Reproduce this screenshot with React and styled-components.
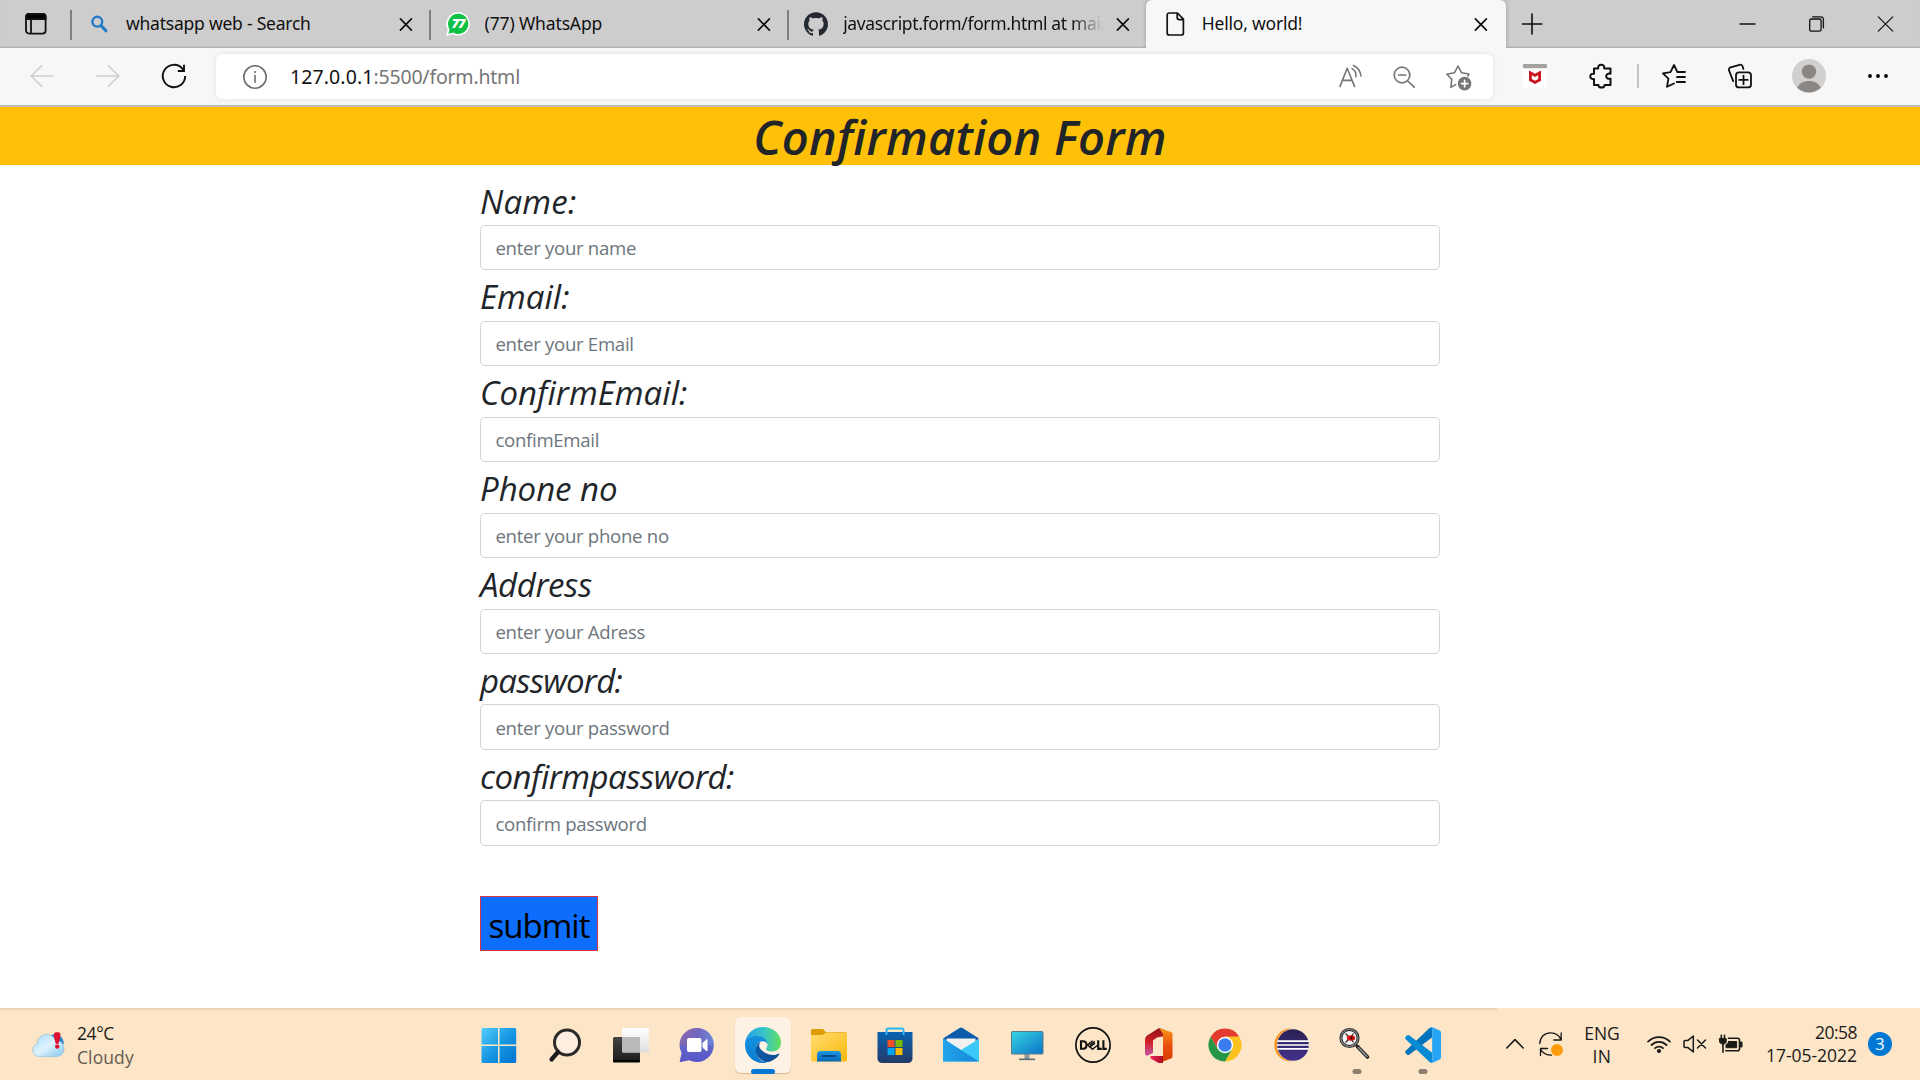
import React from "react";
import styled, { createGlobalStyle } from "styled-components";
import { SiGithub } from "react-icons/si";

const GlobalStyle = createGlobalStyle`
  *, *::before, *::after { box-sizing: border-box; }
  body { margin: 0; background: #fff; overflow: hidden; }
  svg { display: block; flex: none; overflow: visible; }
`;

const Screen = styled.div`
  width: 1920px;
  height: 1080px;
  display: grid;
  grid-template-rows: 48px 59px 1fr 72px;
  background: #fff;
  font-family: "Open Sans", "Noto Sans", sans-serif;
`;

/* ---------- Browser tab strip ---------- */

const TabStrip = styled.header`
  display: flex;
  align-items: center;
  background: #cdcdcd;
  box-shadow: inset 0 -2px 2px -1px rgba(0, 0, 0, 0.18);
`;

const TabActions = styled.div`
  width: 70px;
  padding-left: 25px;
`;

const Divider = styled.span`
  flex: none;
  width: 2px;
  height: 30px;
  margin-top: 2px;
  background: #7f7f7f;
`;

const Tab = styled.div`
  flex: none;
  width: ${(p) => (p.$active ? 360 : 356.6)}px;
  height: 48px;
  padding: ${(p) => (p.$active ? "0 17px" : "0 15px")};
  display: flex;
  align-items: center;
  border-radius: 6px 6px 0 0;
  background: ${(p) => (p.$active ? "#f7f7f7" : "transparent")};
  box-shadow: ${(p) => (p.$active ? "0 0 4px rgba(0,0,0,0.25)" : "none")};
  clip-path: inset(0 -4px 0 -4px);
`;

const TabTitle = styled.span`
  flex: 1;
  min-width: 0;
  margin: 0 12px 0 15px;
  padding-bottom: 2px;
  overflow: hidden;
  white-space: nowrap;
  font: 17.5px/24px "Noto Sans", sans-serif;
  letter-spacing: ${(p) => p.$track}px;
  color: #111;
  mask-image: ${(p) => (p.$fade ? "linear-gradient(90deg, #000 88%, transparent 100%)" : "none")};
`;

const NewTab = styled.div`
  margin-left: 16px;
  padding-bottom: 1px;
`;

const WindowControls = styled.div`
  margin-left: auto;
  padding-right: 27px;
  display: flex;
  gap: 54px;
`;

/* ---------- Toolbar ---------- */

const Toolbar = styled.nav`
  display: flex;
  align-items: center;
  padding: 0 30px 2px;
  background: #f7f7f7;
  border-bottom: 2px solid #bdbdbd;
`;

const NavButtons = styled.div`
  display: flex;
  gap: 42px;
`;

const AddressBar = styled.div`
  flex: none;
  width: 1277px;
  height: 45px;
  margin: 2px 30px 0;
  padding: 0 23px 0 27px;
  display: flex;
  align-items: center;
  border-radius: 6px;
  background: #fff;
  box-shadow: 0 0 5px rgba(0, 0, 0, 0.1);
`;

const Url = styled.span`
  margin-left: 23px;
  font: 19.5px/28px "Noto Sans", sans-serif;
  letter-spacing: -0.2px;
  color: #767676;
`;

const Host = styled.span`
  color: #111;
  letter-spacing: 0.1px;
`;

const AddressActions = styled.div`
  margin-left: auto;
  display: flex;
  gap: 30px;
`;

const ToolbarSeparator = styled.span`
  width: 2px;
  height: 24px;
  margin: 0 23px 0 24px;
  background: #c2c2c2;
`;

const Extensions = styled.div`
  display: flex;
  align-items: center;
  gap: 42px;
`;

const Profile = styled.div`
  display: flex;
  align-items: center;
  gap: 40px;
  margin-left: 40px;
`;

/* ---------- Page ---------- */

const Page = styled.main`
  display: flex;
  flex-direction: column;
  align-items: center;
`;

const Banner = styled.h1`
  width: 100%;
  height: 58px;
  margin: 0 0 9.6px;
  background: #ffc107;
  color: #212529;
  text-align: center;
  font: italic 600 47px/61px "Open Sans", sans-serif;
  letter-spacing: 0.27px;
`;

const Form = styled.form`
  width: 960px;
  display: flex;
  flex-direction: column;
  align-items: flex-start;
`;

const Label = styled.label`
  height: 50.4px;
  font-size: 33px;
  line-height: 53.2px;
  font-style: italic;
  letter-spacing: ${(p) => p.$track}px;
  color: #212529;
`;

const Input = styled.input`
  width: 960px;
  height: 45.5px;
  padding: 7px 14.4px;
  border: 1px solid #ced4da;
  border-radius: 4.8px;
  background: #fff;
  font: 18.6px/28.8px "Open Sans", sans-serif;
  letter-spacing: -0.29px;
  outline: none;
  &::placeholder { color: #6c757d; opacity: 1; }
`;

const Submit = styled.button`
  width: 118px;
  height: 55px;
  margin-top: 50px;
  padding: 4px 0 0;
  border: 1px solid #dc3545;
  background: #0d6efd;
  color: #000;
  font: 33px/49px "Open Sans", sans-serif;
  letter-spacing: -0.95px;
`;

/* ---------- Taskbar ---------- */

const Taskbar = styled.footer`
  display: grid;
  grid-template-columns: 466px 990px 1fr;
  background: linear-gradient(#ecd3b5, #ecd3b5) 0 0 / 1497px 2px no-repeat, #fde5c7;
`;

const Weather = styled.div`
  display: flex;
  align-items: center;
  gap: 12px;
  padding: 1px 0 0 32px;
`;

const Lines = styled.div`
  display: flex;
  flex-direction: column;
  align-items: ${(p) => p.$align || "flex-start"};
  width: ${(p) => (p.$width ? p.$width + "px" : "auto")};
  padding-top: ${(p) => p.$drop || 0}px;
  font-size: 17.5px;
  line-height: ${(p) => p.$leading || 23.5}px;
  color: #1b1a19;
  white-space: nowrap;
`;

const Line = styled.span`
  letter-spacing: ${(p) => p.$track || 0}px;
  color: ${(p) => (p.$muted ? "#655c50" : "inherit")};
`;

const Apps = styled.div`
  display: grid;
  grid-template-columns: repeat(15, 66px);
`;

const AppSlot = styled.div`
  position: relative;
  display: grid;
  place-items: center;
  padding-top: 2px;
  &::after {
    content: "";
    position: absolute;
    bottom: 6px;
    left: 50%;
    width: ${(p) => (p.$state === "active" ? 24 : 9)}px;
    height: 5px;
    transform: translateX(-50%);
    border-radius: 3px;
    background: ${(p) => (p.$state === "active" ? "#0078d4" : "#8d7f6f")};
    display: ${(p) => (p.$state ? "block" : "none")};
  }
`;

const AppTile = styled.div`
  display: grid;
  place-items: center;
  width: 56px;
  height: 56px;
  border-radius: 6px;
  background: ${(p) => (p.$active ? "#fef2e4" : "transparent")};
  box-shadow: ${(p) => (p.$active ? "0 1px 1px rgba(120,80,30,0.3)" : "none")};
`;

const Tray = styled.div`
  display: flex;
  align-items: center;
  padding-left: 50px;
`;

const SyncSlot = styled.div`
  margin-left: -6px;
`;

const TrayGroup = styled.div`
  display: flex;
  align-items: center;
  gap: ${(p) => p.$gap}px;
  margin-right: ${(p) => p.$after}px;
`;

const Badge = styled.span`
  width: 24px;
  height: 24px;
  margin-left: 11px;
  border-radius: 50%;
  background: #0078d4;
  color: #fff;
  text-align: center;
  font-size: 16.5px;
  line-height: 24px;
`;

/* ---------- Icons ---------- */

const Line24 = ({ color = "#111", sw = 1.6, w = 24, h = 24, children }) => (
  <svg width={w} height={h} viewBox={`0 0 ${w} ${h}`} fill="none" stroke={color} strokeWidth={sw} strokeLinecap="round" strokeLinejoin="round">
    {children}
  </svg>
);

const TabActionsIcon = () => (
  <Line24 w={22} h={22} sw={1.8}>
    <rect x="1" y="1" width="19.6" height="19.6" rx="3" />
    <path d="M1 4a3 3 0 0 1 3-3h13.6a3 3 0 0 1 3 3v2H1z" fill="#000" />
    <path d="M6 6v14" />
  </Line24>
);
const SearchTabIcon = () => (
  <Line24 color="#2079c9" sw={2.4}>
    <circle cx="10.3" cy="9.7" r="4.9" />
    <path d="M14 13.6l5 5.2" strokeWidth="3" />
  </Line24>
);
const WhatsAppIcon = () => (
  <svg width="24" height="24" viewBox="0 0 24 24">
    <path d="M12.2.2a11.7 11.7 0 1 1-5.6 22L0 24l1.8-6.4A11.7 11.7 0 0 1 12.2.2z" fill="#fff" />
    <path d="M12.3 1.8a10.1 10.1 0 1 1-5.2 18.8L2.4 21.8l1.2-4.6A10.1 10.1 0 0 1 12.3 1.8z" fill="#0cc143" />
    <text x="12.2" y="16.4" textAnchor="middle" fontFamily="Open Sans, sans-serif" fontSize="12.5" fontWeight="800" fontStyle="italic" letterSpacing="-.8" fill="#fff">77</text>
  </svg>
);
const PageIcon = () => (
  <Line24 sw={1.7}>
    <path d="M6.2 1h8.2l6 6.2V21a2 2 0 0 1-2 2H6.2a2 2 0 0 1-2-2V3a2 2 0 0 1 2-2zM14.2 1v4.6a2 2 0 0 0 2 2h4.2" />
  </Line24>
);
const CloseIcon = () => (
  <Line24 w={16} h={16} sw={1.7}><path d="M2.4 2.8l11 11.4M13.4 2.8l-11 11.4" /></Line24>
);
const PlusIcon = () => (
  <Line24 w={20} h={22}><path d="M10 1v20M.5 11h19.3" /></Line24>
);
const MinimizeIcon = () => (
  <Line24 w={15} h={16} sw={1.4}><path d="M0 8h15" /></Line24>
);
const RestoreIcon = () => (
  <Line24 w={15} h={16} sw={1.3}>
    <rect x=".7" y="3" width="11.4" height="12.2" rx="1.8" />
    <path d="M3.6.8h8.2a2.6 2.6 0 0 1 2.6 2.6v8.4" />
  </Line24>
);
const WinCloseIcon = () => (
  <Line24 w={15} h={16} sw={1.2}><path d="M.3.8l14.4 14.4M14.7.8L.3 15.2" /></Line24>
);

const BackIcon = () => (
  <Line24 color="#cfcfcf" sw={1.6}><path d="M23.3 12H1M11.6 1.8L1 12l10.6 10.2" /></Line24>
);
const ForwardIcon = () => (
  <Line24 color="#cfcfcf" sw={1.6}><path d="M.7 12H23M12.4 1.8L23 12 12.4 22.2" /></Line24>
);
const RefreshIcon = () => (
  <Line24 sw={1.9}>
    <path d="M23.2 12A11.2 11.2 0 1 1 20.4 4.6L22 6.8" strokeLinecap="butt" />
    <path d="M22 .8v6.2h-6.2" strokeLinecap="butt" strokeLinejoin="miter" />
  </Line24>
);
const InfoIcon = () => (
  <Line24 color="#6e6e6e" sw={1.6}>
    <circle cx="12" cy="12" r="11.2" />
    <path d="M12 10.6v6.6" />
    <circle cx="12" cy="7" r=".7" fill="#6e6e6e" strokeWidth=".8" />
  </Line24>
);
const ReadAloudIcon = () => (
  <Line24 color="#767676" sw={1.6}>
    <path d="M2 21.4L9.2 3.2l7.3 18.2M4.6 15.4h9.4M14 3.600a8 8 0 0 1 3.900 8M15.500.4a13 13 0 0 1 7.500 10.600" />
  </Line24>
);
const ZoomOutIcon = () => (
  <Line24 color="#767676" sw={1.7}>
    <circle cx="10" cy="10" r="7.8" />
    <path d="M6.4 10h7.2M15.8 16l6.4 6.2" />
  </Line24>
);
const StarAddIcon = () => (
  <Line24 color="#767676" sw={1.6}>
    <path d="M9.6 19.6l-4.8 2.8 1-8.2L.8 9.2l7.6-1.4L12 1l3.6 6.8 7.4 1.2-1.2 2" />
    <circle cx="18.6" cy="18.6" r="6" fill="#767676" />
    <path d="M18.6 15.4v6.4M15.4 18.6h6.4" stroke="#fff" strokeWidth="1.7" />
  </Line24>
);
const McAfeeIcon = () => (
  <svg width="24" height="24" viewBox="0 0 24 24">
    <path d="M0 2h24v22H0z" fill="#fff" />
    <rect width="24" height="4.2" rx="1" fill="#a5a2a2" />
    <path d="M6 6.6l6 3.2 6-3.2v10.2L12 20l-6-3.2z" fill="#c8141e" />
    <path d="M8.8 11.2l3.2 1.7 3.2-1.7v3.8L12 16.8 8.8 15z" fill="#fff" />
  </svg>
);
const PuzzleIcon = () => (
  <Line24 sw={2}>
    <path d="M5 4.500h4.200c-.4-2.500 1-3.800 3-3.800s3.400 1.300 3 3.800H21.500v5.200c-2.600-.5-4.300.6-4.300 2.500s1.700 3 4.300 2.500V21h-6c.4 1.600-1.100 2.500-3 2.500s-3.400-.9-3-2.500H5v-5.900c-2.400.3-3.700-.9-3.700-2.700S2.600 9.400 5 9.700z" />
  </Line24>
);
const FavoritesIcon = () => (
  <Line24 sw={1.8}>
    <path d="M12 19.500l-7 3.300 1.400-8.200L.9 9.400l7.600-1.200L12 1l3.400 7H23M15 13h8M14.800 18h8.200" />
  </Line24>
);
const CollectionsIcon = () => (
  <Line24 sw={1.8}>
    <rect x="8" y="8.400" width="15" height="15" rx="3" />
    <path d="M15.500 11.600v8.600M11.200 15.900h8.600M5.200 17.200L1 6.400a2.400 2.400 0 0 1 1.600-3L11.600.8a2.400 2.400 0 0 1 3 1.600l.8 2.600" />
  </Line24>
);
const AvatarIcon = () => (
  <svg width="34" height="34" viewBox="0 0 34 34">
    <circle cx="17" cy="17" r="17" fill="#d2d0ce" />
    <circle cx="17" cy="12.600" r="7.200" fill="#8a8683" />
    <path d="M5.300 28.800C7 24.400 11.500 22 17 22s10 2.400 11.700 6.800A17 17 0 0 1 17 33.200a17 17 0 0 1-11.700-4.400z" fill="#8a8683" />
  </svg>
);
const MoreIcon = () => (
  <svg width="24" height="24" viewBox="0 0 24 24">
    <circle cx="4" cy="12" r="1.900" /><circle cx="12" cy="12" r="1.900" /><circle cx="20" cy="12" r="1.900" />
  </svg>
);

const WeatherIcon = () => (
  <svg width="33" height="26" viewBox="0 0 33 26">
    <defs>
      <linearGradient id="cl" x1="0" y1="0" x2="1" y2="1">
        <stop offset="0" stopColor="#a7dcf8" /><stop offset=".5" stopColor="#dff2fd" /><stop offset="1" stopColor="#86c8ee" />
      </linearGradient>
    </defs>
    <path d="M18 4c7-5 14 1 13.800 8l-5 1z" fill="#2f83c8" />
    <path d="M6.500 24.400A6.400 6.400 0 0 1 5.200 12 9.500 9.500 0 0 1 14 2.400c5 0 8.500 2.600 9.600 6.200 5 0 8.400 3 8.400 8s-3.400 7.800-7.600 7.800z" fill="url(#cl)" stroke="#78b8de" strokeWidth=".6" />
    <path d="M22.200 1.200c1-1.300 5-1.300 6 0 .8 1.600-.6 7-1.400 10-.4 1-2.800 1-3.200 0-.8-3-2.200-8.400-1.400-10z" fill="#e0102f" />
    <circle cx="25.200" cy="14.600" r="2.200" fill="#e0102f" />
  </svg>
);

const App36 = ({ children }) => <svg width="36" height="36" viewBox="0 0 36 36">{children}</svg>;
const Grad = ({ id, from, mid, to, h, v }) => (
  <linearGradient id={id} x1="0" y1="0" x2={v ? 0 : 1} y2={h ? 0 : 1}>
    <stop offset="0" stopColor={from} />
    {mid && <stop offset=".5" stopColor={mid} />}
    <stop offset="1" stopColor={to} />
  </linearGradient>
);

const StartIcon = () => (
  <App36>
    <defs>
      <linearGradient id="st" gradientUnits="userSpaceOnUse" x1="0" y1="0" x2="36" y2="36">
        <stop offset="0" stopColor="#56d0fc" /><stop offset=".5" stopColor="#1899e3" /><stop offset="1" stopColor="#0072d0" />
      </linearGradient>
    </defs>
    <path d="M2 1h15v16.500H.500V2.500A1.500 1.500 0 0 1 2 1zM18.500 1h15.200a1.500 1.500 0 0 1 1.500 1.500v15H18.500zM.5 19H17v17H2a1.500 1.500 0 0 1-1.500-1.500zM18.500 19h16.700v15.500a1.500 1.500 0 0 1-1.500 1.500H18.500z" fill="url(#st)" />
  </App36>
);
const SearchIcon = () => (
  <App36>
    <circle cx="20" cy="15.500" r="12.500" fill="#fdeee0" stroke="#2b2a29" strokeWidth="3" />
    <path d="M11 25l-6.500 7.500" stroke="#1c1b1b" strokeWidth="4.200" strokeLinecap="round" />
  </App36>
);
const TaskViewIcon = () => (
  <App36>
    <defs><Grad id="tv" from="#454442" to="#1c1b1a" v /><Grad id="tw" from="#fff" to="#dedede" v /></defs>
    <rect x="0" y="10" width="27" height="25" rx="1.500" fill="url(#tv)" />
    <path d="M0 33h27v1.500a1 1 0 0 1-1 1H1a1 1 0 0 1-1-1z" fill="#050505" />
    <rect x="9" y="1" width="27" height="24.500" rx="1.500" fill="url(#tw)" />
    <path d="M9 10h18v15.500H10.500A1.500 1.500 0 0 1 9 24z" fill="#b9b9b9" />
  </App36>
);
const ChatIcon = () => (
  <App36>
    <defs><Grad id="ch" from="#8b68ad" mid="#6668c8" to="#5554c8" v /><Grad id="ch2" from="#9a679e" mid="#6466c6" to="#6aa0f0" h /></defs>
    <path d="M18 1a17 17 0 1 1-7.800 32.200L1.600 35c-.8.100-1-.4-.8-1l1.800-8A17 17 0 0 1 18 1z" fill="url(#ch)" />
    <path d="M18 1a17 17 0 0 1 17 17H1A17 17 0 0 1 18 1z" fill="url(#ch2)" opacity=".55" />
    <rect x="8" y="11" width="14.500" height="14" rx="2" fill="#fff" />
    <path d="M24 16l4-3.500V24l-4-3.500z" fill="#fff" stroke="#fff" strokeLinejoin="round" />
  </App36>
);
const EdgeIcon = () => (
  <App36>
    <defs>
      <Grad id="e1" from="#249fe0" mid="#35c3cf" to="#63e05c" h />
      <Grad id="e2" from="#1491df" to="#0a7bd0" v />
      <Grad id="e3" from="#0c5ba8" to="#124c92" h />
    </defs>
    <path d="M.2 15.500C1.500 6 9 0 18 0c10 0 18 7 18 15.500 0 6-4 9-9 9-4 0-6-1-6-2.200 0-1.300 1.500-1.800 1.500-4.300 0-5-5-9-11-9-5.500 0-9.600 2.500-11.300 6.500z" fill="url(#e1)" />
    <path d="M.2 15C2 10.800 6.500 8.800 11.500 8.800c6 0 10.800 3.800 11 8.400-1-2.200-3-3.200-5-3-4.500.3-7 5-6.500 10C11.500 30 16 35 22 35.400c-1.300.4-2.600.6-4 .6C8 36 0 28 0 18c0-1 0-2 .2-3z" fill="url(#e2)" />
    <path d="M15.500 15c-5.500 2.500-7 11-1 16.500 3.500 3.500 8.500 4.500 12 2.500 3.500-1.700 6.400-4.300 7.800-6.800.3-.6-.3-.9-.9-.5C30 28.400 25 28.500 20.500 26 15 23 12.500 19 15.500 15z" fill="url(#e3)" />
  </App36>
);
const FolderIcon = () => (
  <App36>
    <defs><Grad id="fo" from="#ffdd70" to="#fbb80c" /><Grad id="fp" from="#1f97e2" to="#0667b8" v /></defs>
    <path d="M0 3.500A1.500 1.500 0 0 1 1.500 2H12l3 3.200h19.500A1.500 1.500 0 0 1 36 6.700V14H0z" fill="#dd9d05" />
    <path d="M0 8h11.500L15 5.700h21V33a1.500 1.500 0 0 1-1.500 1.500h-33A1.500 1.500 0 0 1 0 33z" fill="url(#fo)" />
    <path d="M6 34.500V27.500A3.500 3.500 0 0 1 9.500 24h17a3.500 3.500 0 0 1 3.500 3.500v7z" fill="url(#fp)" />
    <path d="M11.500 29h13" stroke="#0b4a86" strokeWidth="2" strokeLinecap="round" />
  </App36>
);
const StoreIcon = () => (
  <App36>
    <defs><Grad id="so" from="#0a63b2" to="#243a66" v /></defs>
    <path d="M9.500 8V3a1.500 1.500 0 0 1 1.500-1.500h14A1.500 1.500 0 0 1 26.500 3v5" fill="none" stroke="#2cb5ef" strokeWidth="2" />
    <path d="M.5 5h35v26.500a4.500 4.500 0 0 1-4.500 4.500H5a4.500 4.500 0 0 1-4.500-4.500z" fill="url(#so)" />
    <path d="M9.500 8V5M26.500 8V5" stroke="#2cb5ef" strokeWidth="2" />
    <path d="M10.500 13h7v7h-7z" fill="#f25022" /><path d="M18.500 13h7v7h-7z" fill="#7fba00" />
    <path d="M10.500 21h7v7h-7z" fill="#00a4ef" /><path d="M18.500 21h7v7h-7z" fill="#ffb900" />
  </App36>
);
const MailIcon = () => (
  <App36>
    <defs><Grad id="ml" from="#22a4ea" to="#1685d8" h /></defs>
    <path d="M0 11.500L16.500.900a3 3 0 0 1 3 0L36 11.500 27 18H9z" fill="#0c5cab" />
    <path d="M3.500 11.500h29v9L18 25 3.500 20z" fill="#f1f1f1" />
    <path d="M0 11.500L18 23 36 12v22.500H0z" fill="#3ac9f8" />
    <path d="M0 11.500L36 34.500H0z" fill="url(#ml)" />
  </App36>
);
const MonitorIcon = () => (
  <App36>
    <defs><Grad id="mo" from="#37d6e4" to="#0b72c4" /></defs>
    <path d="M15.500 27h5v5h-5z" fill="#8d979f" />
    <path d="M10 32.300h16" stroke="#5d6870" strokeWidth="1.600" />
    <rect x="2.500" y="4.500" width="31.500" height="22.500" rx=".8" fill="url(#mo)" stroke="#5b7d8a" />
  </App36>
);
const DellIcon = () => (
  <App36>
    <circle cx="18" cy="18" r="17.100" fill="none" stroke="#111" strokeWidth="1.700" />
    <g fill="none" stroke="#111" strokeWidth="2.100">
      <path d="M6 14.200h2c2.300 0 3.500 1.500 3.500 3.800s-1.200 3.800-3.500 3.800H6zM23.200 13.200v8.700h3.600M28.400 13.200v8.700h3.400" />
      <path d="M17.600 13.700l-5 4.200 2.200 2.200 5.200-4M15.200 20l2.200 2.200 4.800-3.700M14.800 18.300l5-4" strokeWidth="1.400" />
    </g>
  </App36>
);
const OfficeIcon = () => (
  <App36>
    <defs><Grad id="o1" from="#8d1014" mid="#d12027" to="#c259a2" v /><Grad id="o2" from="#f79a1c" mid="#e8500c" to="#d83b01" v /><Grad id="o3" from="#f0255f" to="#a90f22" h /></defs>
    <path d="M4 12.500a5 5 0 0 1 2.500-4.300L18 1l6 2v6l-8 1.500-4 3v12.500L7 28.500c-1.500.500-3-.3-3-2z" fill="url(#o1)" />
    <path d="M18 1l12 4a2 2 0 0 1 1.500 2v22.500a2 2 0 0 1-1.500 2L18 36l4-3V7z" fill="url(#o2)" />
    <path d="M10 29h12v7h-4.500L10.500 32c-1.500-1-1.500-2.500-.5-3z" fill="url(#o3)" />
  </App36>
);
const ChromeIcon = () => (
  <App36>
    <path d="M3.710 9.750A16.500 16.500 0 0 1 32.290 9.750H18L10.860 22.130z" fill="#e33b2e" />
    <path d="M32.290 9.750A16.500 16.500 0 0 1 18 34.500L25.140 22.130 18 9.750z" fill="#fcc31e" />
    <path d="M18 34.500A16.500 16.500 0 0 1 3.710 9.750L10.860 22.130H25.140z" fill="#259645" />
    <circle cx="18" cy="18" r="8.200" fill="#fff" /><circle cx="18" cy="18" r="6.700" fill="#3b7ded" />
  </App36>
);
const EclipseIcon = () => (
  <App36>
    <defs><Grad id="ec" from="#2a2153" to="#43318c" v /></defs>
    <path d="M16 1.600A16.500 16.500 0 0 0 16 34.400L20 34V2z" fill="#f7941e" />
    <circle cx="20" cy="18" r="16.200" fill="#fde5c7" /><circle cx="20" cy="18" r="15.800" fill="url(#ec)" />
    <path d="M4.300 14.200h31.500M4 18h32M4.300 21.800h31.500" stroke="#fff" strokeWidth="1.700" />
  </App36>
);
const InspectorIcon = () => (
  <App36>
    <path d="M18.500 19.500L28.500 30" stroke="#222" strokeWidth="3.600" strokeLinecap="round" />
    <path d="M19.500 20.500L28 29.500" stroke="#999" strokeWidth="1.500" strokeLinecap="round" />
    <circle cx="10.500" cy="11" r="8.600" fill="#f4f4f4" stroke="#222" strokeWidth="3" />
    <circle cx="10.500" cy="11" r="8.600" fill="none" stroke="#858585" strokeWidth="1.300" />
    <path d="M6.500 6.500l3 3M14.500 6.500l-2 3M6.500 15.500l3-3M14.500 15.500l-2-3" stroke="#222" strokeWidth="1.200" />
    <ellipse cx="12" cy="11" rx="4.200" ry="2.800" fill="#e01010" /><path d="M11.500 9.500h2v3h-2z" fill="#400" />
  </App36>
);
const VSCodeIcon = () => (
  <App36>
    <path d="M27 1v9.500L4.500 27.600a2 2 0 0 1-2.600-.1L.7 26.200a1.600 1.600 0 0 1 0-2.400L24.500 1z" fill="#0273bd" />
    <path d="M27 35v-9.500L4.500 8.400a2 2 0 0 0-2.600.1L.7 9.800a1.600 1.600 0 0 0 0 2.400L24.500 35z" fill="#078bd4" />
    <path d="M24.300 1.200A2.600 2.600 0 0 1 27.400.200l7.300 3.400A2.200 2.200 0 0 1 36 5.600v24.800a2.200 2.200 0 0 1-1.300 2l-7.300 3.400a2.600 2.600 0 0 1-3.100-1c1.500 1 2.900 0 2.900-1.600V2.800c0-1.600-1.400-2.600-2.900-1.600z" fill="#25a5f3" />
  </App36>
);

const ChevronIcon = () => (
  <Line24 w={18} h={12} sw={1.600} color="#1b1a19"><path d="M.8 10L9 1.600 17.200 10" /></Line24>
);
const SyncIcon = () => (
  <Line24 sw={1.300} color="#1b1a19">
    <path d="M.8 11.500C1 5 5.500.8 11.500.8c5 0 9 2.600 10.700 7.200M22.200.8v7.200h-7.400M12.500 23.200C7.500 23.200 3.400 21 1.500 17M1.500 23.500v-7h7" />
    <circle cx="18" cy="18" r="6" fill="#ff9a0d" stroke="none" />
  </Line24>
);
const WifiIcon = () => (
  <Line24 w={24} h={18} sw={1.800} color="#1b1a19">
    <path d="M1 6.600a15.600 15.600 0 0 1 22 0M4.500 10a10.600 10.600 0 0 1 15 0M8 13.200a5.800 5.800 0 0 1 8 0" />
    <circle cx="12" cy="16" r="1.200" fill="#1b1a19" />
  </Line24>
);
const VolumeIcon = () => (
  <Line24 w={24} h={18} sw={1.500} color="#1b1a19">
    <path d="M10.300 1v16L5 12.600H2a1 1 0 0 1-1-1V6.400a1 1 0 0 1 1-1h3zM14.500 5l8 8M22.500 5l-8 8" />
  </Line24>
);
const BatteryIcon = () => (
  <Line24 w={24} h={18} sw={1.600} color="#1b1a19">
    <path d="M9.500 3.300h9a2 2 0 0 1 2 2v8.400a2 2 0 0 1-2 2H6.800" />
    <path d="M9.600 6.500h8v6.200H7V9.600c1.500-.5 2.400-1.500 2.600-3.100zM21.800 7h1.200v5h-1.200z" fill="#1b1a19" strokeWidth="1" />
    <path d="M.6 3.600h6.600v3C7.200 8.200 6 9 4 9S.6 8.200.6 6.600z" fill="#1b1a19" strokeWidth="1" />
    <path d="M2.300.2v3M5.500.2v3M4 9v8.200" />
  </Line24>
);

/* ---------- Data ---------- */

const tabs = [
  { title: "whatsapp web - Search", icon: <SearchTabIcon />, track: -0.23 },
  { title: "(77) WhatsApp", icon: <WhatsAppIcon />, track: -0.14 },
  { title: "javascript.form/form.html at main", icon: <SiGithub size={24} color="#24292f" />, track: -0.36, fade: true },
  { title: "Hello, world!", icon: <PageIcon />, track: -0.21, active: true },
];

const fields = [
  { label: "Name:", hint: "enter your name", track: 0.2 },
  { label: "Email:", hint: "enter your Email", track: 0 },
  { label: "ConfirmEmail:", hint: "confimEmail", track: 0.04 },
  { label: "Phone no", hint: "enter your phone no", track: -0.04 },
  { label: "Address", hint: "enter your Adress", track: -0.4 },
  { label: "password:", hint: "enter your password", track: -0.75 },
  { label: "confirmpassword:", hint: "confirm password", track: -0.49 },
];

const apps = [
  { Icon: StartIcon }, { Icon: SearchIcon }, { Icon: TaskViewIcon }, { Icon: ChatIcon },
  { Icon: EdgeIcon, state: "active" },
  { Icon: FolderIcon }, { Icon: StoreIcon }, { Icon: MailIcon }, { Icon: MonitorIcon },
  { Icon: DellIcon }, { Icon: OfficeIcon }, { Icon: ChromeIcon }, { Icon: EclipseIcon },
  { Icon: InspectorIcon, state: "running" }, { Icon: VSCodeIcon, state: "running" },
];

export default function App() {
  return (
    <Screen>
      <GlobalStyle />
      <TabStrip>
        <TabActions><TabActionsIcon /></TabActions>
        {tabs.map((t) => (
          <React.Fragment key={t.title}>
            {!t.active && <Divider />}
            <Tab $active={t.active}>
              {t.icon}
              <TabTitle $track={t.track} $fade={t.fade}>{t.title}</TabTitle>
              <CloseIcon />
            </Tab>
          </React.Fragment>
        ))}
        <NewTab><PlusIcon /></NewTab>
        <WindowControls><MinimizeIcon /><RestoreIcon /><WinCloseIcon /></WindowControls>
      </TabStrip>

      <Toolbar>
        <NavButtons><BackIcon /><ForwardIcon /><RefreshIcon /></NavButtons>
        <AddressBar>
          <InfoIcon />
          <Url><Host>127.0.0.1</Host>:5500/form.html</Url>
          <AddressActions><ReadAloudIcon /><ZoomOutIcon /><StarAddIcon /></AddressActions>
        </AddressBar>
        <Extensions><McAfeeIcon /><PuzzleIcon /></Extensions>
        <ToolbarSeparator />
        <Extensions><FavoritesIcon /><CollectionsIcon /></Extensions>
        <Profile><AvatarIcon /><MoreIcon /></Profile>
      </Toolbar>

      <Page>
        <Banner>Confirmation Form</Banner>
        <Form>
          {fields.map((f, i) => (
            <React.Fragment key={f.label}>
              <Label htmlFor={`field-${i}`} $track={f.track}>{f.label}</Label>
              <Input id={`field-${i}`} placeholder={f.hint} />
            </React.Fragment>
          ))}
          <Submit type="button">submit</Submit>
        </Form>
      </Page>

      <Taskbar>
        <Weather>
          <WeatherIcon />
          <Lines $leading={24}><Line $track={-0.4}>24°C</Line><Line $muted $track={0.1}>Cloudy</Line></Lines>
        </Weather>
        <Apps>
          {apps.map(({ Icon, state }, i) => (
            <AppSlot key={i} $state={state}>
              <AppTile $active={state === "active"}><Icon /></AppTile>
            </AppSlot>
          ))}
        </Apps>
        <Tray>
          <TrayGroup $gap={21} $after={27}>
            <ChevronIcon />
            <SyncSlot><SyncIcon /></SyncSlot>
            <Lines $align="center" $width={36} $drop={2}><Line>ENG</Line><Line $track={0.4}>IN</Line></Lines>
          </TrayGroup>
          <TrayGroup $gap={12} $after={0}>
            <WifiIcon /><VolumeIcon /><BatteryIcon />
          </TrayGroup>
          <Lines $align="flex-end" $width={114}><Line $track={-0.5}>20:58</Line><Line $track={-0.04}>17-05-2022</Line></Lines>
          <Badge>3</Badge>
        </Tray>
      </Taskbar>
    </Screen>
  );
}
